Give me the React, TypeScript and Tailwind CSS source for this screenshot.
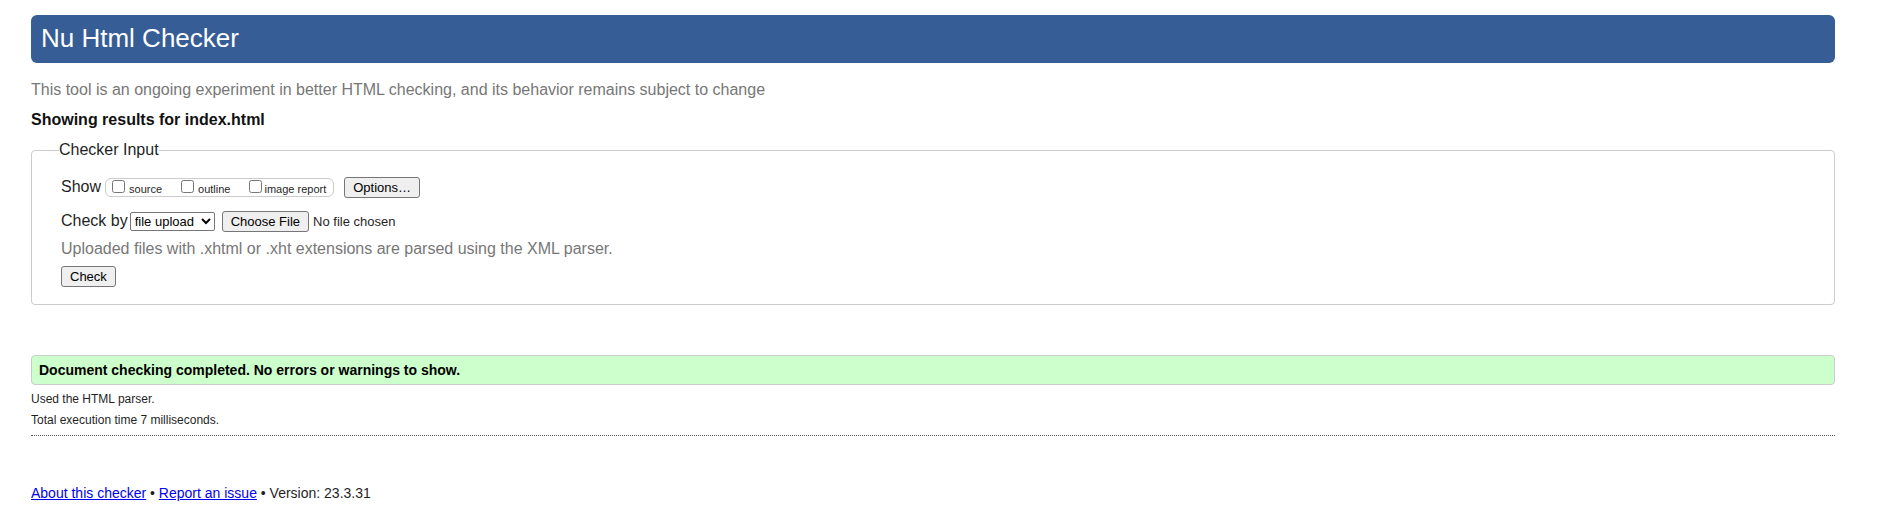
const showOptions = [
  { id: "source", label: "source", gap: "gap-1" },
  { id: "outline", label: "outline", gap: "gap-1" },
  { id: "image-report", label: "image report", gap: "gap-0.5" },
];

const buttonClass =
  "h-[21px] rounded-[3px] border border-[#767676] bg-[#efefef] px-2 text-[13px] leading-[15px] text-black";

const linkClass = "text-[#0000ee] underline";

function CheckerForm() {
  return (
    <form onSubmit={(event) => event.preventDefault()}>
      <fieldset className="mt-2.5 rounded-[4px] border border-[#cccccc] pt-[17px] pr-7 pb-[17px] pl-[29px]">
        <legend className="-ml-0.5 h-5 leading-5">Checker Input</legend>
        <div className="flex h-[21px] items-center">
          <span className="h-[21px] leading-[19px]">Show</span>
          <div className="ml-1 flex h-[19px] items-center gap-[19px] rounded-[6px] border border-[#cccccc] pr-[7px] pl-1.5 text-[11px] leading-[13px]">
            {showOptions.map((option) => (
              <label key={option.id} htmlFor={option.id} className={`flex items-end ${option.gap}`}>
                <input id={option.id} type="checkbox" className="mb-[3px] size-[13px]" />
                {option.label}
              </label>
            ))}
          </div>
          <button type="button" className={`ml-2.5 ${buttonClass}`}>
            Options…
          </button>
        </div>
        <div className="mt-[13px] flex h-[21px] items-center">
          <label htmlFor="check-by" className="h-[21px] leading-[19px]">
            Check by
          </label>
          <select
            id="check-by"
            defaultValue="file upload"
            className="ml-0.5 h-[19px] w-[85px] rounded-[2px] border border-[#767676] bg-white text-[13px] text-black"
          >
            <option>address</option>
            <option>file upload</option>
            <option>text input</option>
          </select>
          <input
            type="file"
            aria-label="File to check"
            className="ml-[7px] h-[21px] text-[13px] leading-[21px] file:mr-1 file:h-[21px] file:rounded-[3px] file:border file:border-solid file:border-[#767676] file:bg-[#efefef] file:px-2 file:text-[13px] file:leading-[15px] file:text-black"
          />
        </div>
        <p className="mt-[7px] leading-5 text-[#777777]">
          Uploaded files with .xhtml or .xht extensions are parsed using the XML parser.
        </p>
        <button type="submit" className={`mt-[7px] block ${buttonClass}`}>
          Check
        </button>
      </fieldset>
    </form>
  );
}

export default function App() {
  return (
    <div className="mr-[43px] ml-[31px] pt-[15px] font-['Liberation_Sans',Arial,sans-serif] text-base text-[#1f1f1f]">
      <header>
        <h1 className="rounded-[6px] bg-[#365d95] px-2.5 pt-2 pb-2.5 text-[26px] leading-[30px] text-white">
          Nu Html Checker
        </h1>
        <p className="mt-[17px] leading-5 text-[#777777]">
          This tool is an ongoing experiment in better HTML checking, and its behavior remains subject to change
        </p>
      </header>
      <main>
        <h2 className="mt-2.5 leading-5 font-bold text-[#111111]">Showing results for index.html</h2>
        <CheckerForm />
        <p className="mt-[50px] rounded-[4px] border border-[#cccccc] bg-[#ccffcc] px-[7px] py-1.5 text-sm leading-4 font-bold text-black">
          Document checking completed. No errors or warnings to show.
        </p>
        <div className="border-b border-dotted border-[#555555] pt-1.5 pb-[7px] text-xs leading-4">
          <p>Used the HTML parser.</p>
          <p className="mt-[5px]">Total execution time 7 milliseconds.</p>
        </div>
      </main>
      <footer className="mt-[47px] pb-4 text-sm leading-5">
        <a href="#about" className={linkClass}>
          About this checker
        </a>
        {" • "}
        <a href="#issues" className={linkClass}>
          Report an issue
        </a>
        {" • Version: 23.3.31"}
      </footer>
    </div>
  );
}
